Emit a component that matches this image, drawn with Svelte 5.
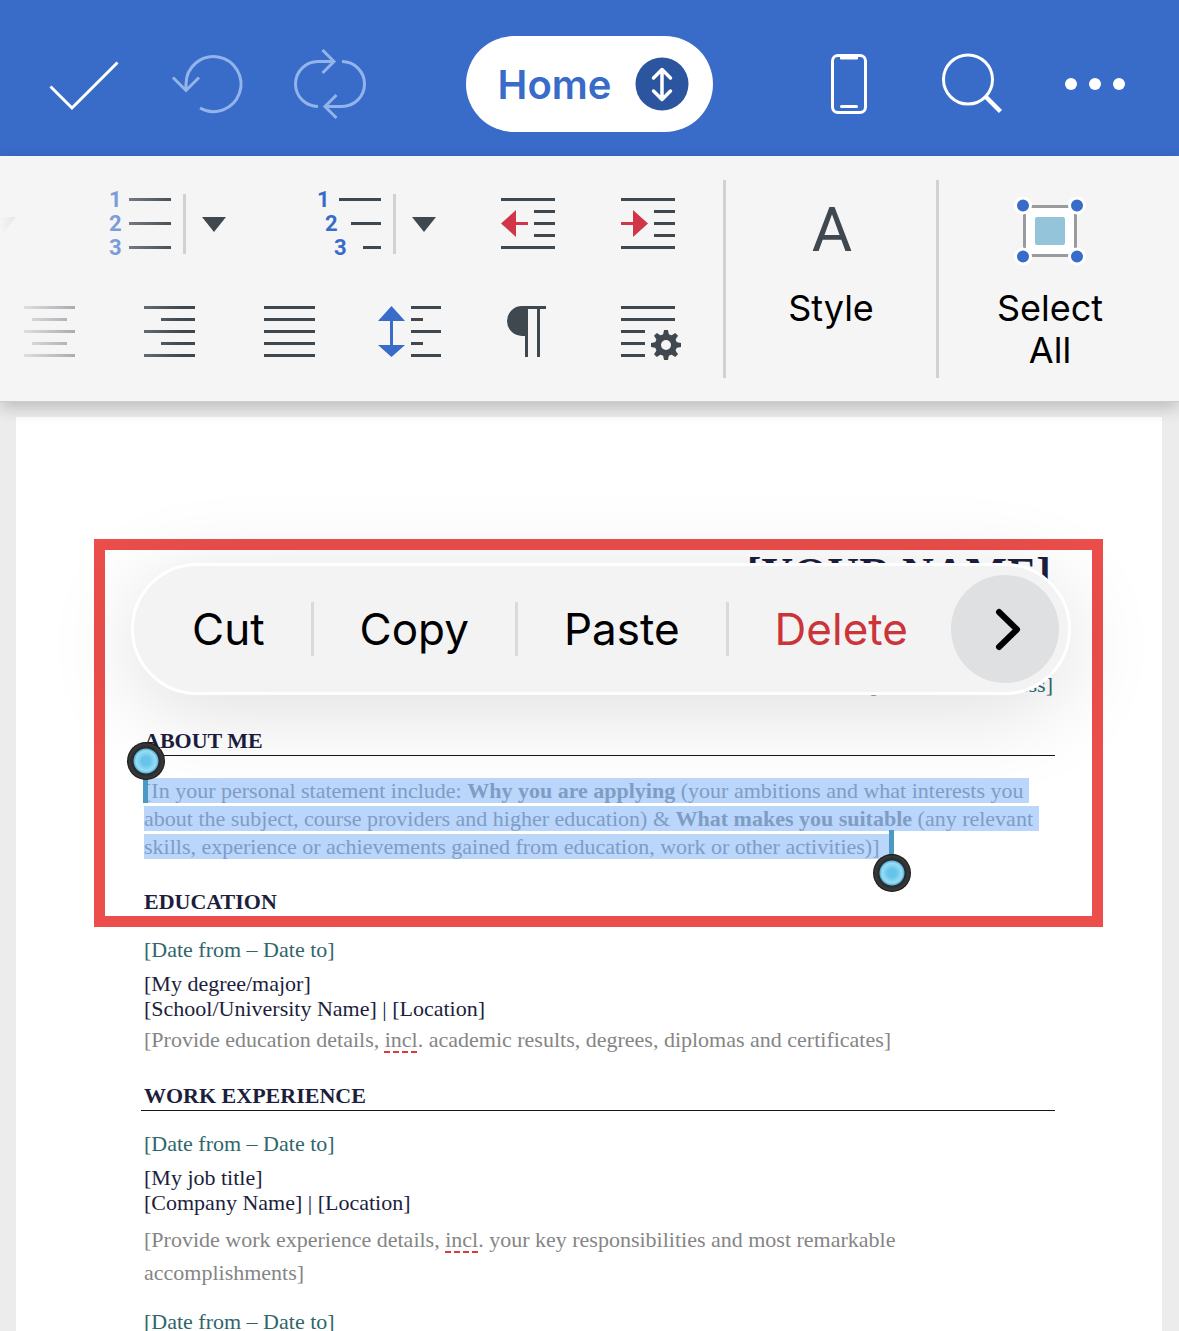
<script>
  const dates = "[Date from – Date to]";
  const teeth = [0, 45, 90, 135, 180, 225, 270, 315];
  const actions = ["Cut", "Copy", "Paste", "Delete"];

  // each line of an icon is [x1, x2], 12px apart
  const aligns = [
    { name: "Align center", lines: [[12, 63], [20, 55], [12, 63], [20, 55], [12, 63]] },
    { name: "Align right", lines: [[12, 63], [29, 63], [12, 63], [29, 63], [12, 63]] },
    { name: "Justify", lines: [[12, 63], [12, 63], [12, 63], [12, 63], [12, 63]] },
  ];
  const lists = [
    { name: "Numbering", digits: [7, 7, 7], starts: [27, 27, 27] },
    { name: "Multilevel list", digits: [5, 13, 22], starts: [27, 39, 51] },
  ];
  const indents = [
    { name: "Decrease indent", arrow: "M9 35.5 24 22v27zM24 34h12v3H24z" },
    { name: "Increase indent", arrow: "M36 35.5 21 22v27zM9 34h12v3H9z" },
  ];
</script>

<div class="app">
  <header>
    <div class="group">
      <button class="tool" aria-label="Done">
        <svg viewBox="0 0 72 72" class="line white"><path d="M2.5 38.5 24 60 69.5 14.5" /></svg>
      </button>
      <button class="tool" aria-label="Undo">
        <svg viewBox="0 0 72 72" class="line pale">
          <path d="M15 42v-6a27.5 27.5 0 1 1 14 24M2 29.5l13 13 13-13" />
        </svg>
      </button>
      <button class="tool" aria-label="Repeat">
        <svg viewBox="0 0 72 72" class="line pale">
          <path d="M24 58.5a22.5 22.5 0 0 1 0-45h16M28.5 2 40 13.5 28.5 25M48 13.5a22.5 22.5 0 0 1 0 45H32M42.5 47 31 58.5 42.5 70" />
        </svg>
      </button>
    </div>
    <button class="tab">
      Home
      <svg viewBox="0 0 54 54">
        <circle cx="27" cy="27" r="26.5" fill="#2c559f" />
        <path d="M27 12.5v30M18.5 21 27 12.5l8.5 8.5M18.5 34l8.5 8.5 8.5-8.5" fill="none" stroke="#fff" stroke-width="3.5" stroke-linecap="round" stroke-linejoin="round" />
      </svg>
    </button>
    <div class="group end">
      <button class="tool" aria-label="Mobile view">
        <svg viewBox="0 0 72 72" class="line white">
          <rect x="19.5" y="7.5" width="33" height="57" rx="5.5" />
          <path d="M27 8h18v2.5a1 1 0 0 1-1 1H28a1 1 0 0 1-1-1z" fill="#fff" stroke="none" />
          <path d="M28.5 58.5h15" stroke-linecap="round" />
        </svg>
      </button>
      <button class="tool" aria-label="Search">
        <svg viewBox="0 0 72 72" class="line white">
          <circle cx="32" cy="31.5" r="24.5" />
          <path d="M49 48 64.5 63.5" stroke-width="4.5" />
        </svg>
      </button>
      <button class="tool" aria-label="More">
        <svg viewBox="0 0 72 72" fill="#fff">
          <circle cx="12" cy="36" r="6" /><circle cx="36" cy="36" r="6" /><circle cx="60" cy="36" r="6" />
        </svg>
      </button>
    </div>
  </header>

  <div class="ribbon">
    <div class="tools">
      <div class="row top">
        <div class="split">
          <button class="caret" aria-label="Bullet options">
            <svg viewBox="0 0 36 36"><path d="M6 11h24L18 26z" /></svg>
          </button>
        </div>
        {#each lists as list}
          <div class="split">
            <button class="tool" aria-label={list.name}>
              <svg viewBox="0 0 72 72">
                {#each list.digits as x, i}
                  <text {x} y={19 + i * 24}>{i + 1}</text>
                  <path d="M{list.starts[i]} {10 + i * 24}H69v3H{list.starts[i]}z" />
                {/each}
              </svg>
            </button>
            <i></i>
            <button class="caret" aria-label="{list.name} options">
              <svg viewBox="0 0 36 36"><path d="M6 11h24L18 26z" /></svg>
            </button>
          </div>
        {/each}
        {#each indents as indent}
          <button class="tool" aria-label={indent.name}>
            <svg viewBox="0 0 72 72">
              <path d="M9 10h54v3H9zM42 22h21v3H42zM42 34h21v3H42zM42 46h21v3H42zM9 58h54v3H9z" />
              <path d={indent.arrow} fill="#d03648" />
            </svg>
          </button>
        {/each}
      </div>
      <div class="row">
        {#each aligns as align}
          <button class="tool" aria-label={align.name}>
            <svg viewBox="0 0 72 72">
              {#each align.lines as [a, b], i}
                <path d="M{a} {10 + i * 12}H{b}v3H{a}z" />
              {/each}
            </svg>
          </button>
        {/each}
        <button class="tool" aria-label="Line spacing">
          <svg viewBox="0 0 72 72">
            <path d="M19.5 10 33 25H21v24h12L19.5 61 6 49h12V25H6z" fill="#396bc8" />
            <path d="M39 10h30v3H39zM39 22h12v3H39zM39 34h30v3H39zM39 46h12v3H39zM39 58h30v3H39z" />
          </svg>
        </button>
        <button class="tool" aria-label="Formatting marks">
          <svg viewBox="0 0 72 72">
            <path d="M30 10h24v3h-6v48h-3V13h-9v48h-3V40h-3a15 15 0 0 1 0-30z" />
          </svg>
        </button>
        <button class="tool" aria-label="Paragraph settings">
          <svg viewBox="0 0 72 72">
            <path d="M9 10h54v3H9zM9 22h54v3H9zM9 34h24v3H9zM9 46h24v3H9zM9 58h24v3H9z" />
            <circle cx="54" cy="49" r="8" fill="none" stroke="#40484f" stroke-width="6" />
            {#each teeth as angle}
              <path d="M51 39l1-5h4l1 5z" transform="rotate({angle} 54 49)" />
            {/each}
          </svg>
        </button>
      </div>
    </div>
    <button class="big">
      <svg viewBox="0 0 72 72"><text class="letter" x="37" y="56">A</text></svg>
      <span>Style</span>
    </button>
    <button class="big last">
      <svg viewBox="0 0 72 72">
        <rect x="10.5" y="11.5" width="51" height="49" fill="#fff" stroke="#9a9b9c" stroke-width="3" />
        <rect x="21" y="22" width="30" height="28" rx="2" fill="#93c4d9" />
        <g fill="#396bc8" stroke="#fff" stroke-width="3">
          <circle cx="9" cy="10.5" r="7.5" /><circle cx="63" cy="10.5" r="7.5" />
          <circle cx="9" cy="61.5" r="7.5" /><circle cx="63" cy="61.5" r="7.5" />
        </g>
      </svg>
      <span>Select<br />All</span>
    </button>
  </div>

  <main>
    <article>
      <h1>[YOUR NAME]</h1>
      <p class="contact">[Your email address]</p>

      <h2>ABOUT ME</h2>
      <p class="about">
        <mark><span class="handle start"></span>[In your personal statement include: <b>Why you are applying</b> (your ambitions and what interests you&nbsp;</mark><br />
        <mark>about the subject, course providers and higher education) &amp; <b>What makes you suitable</b> (any relevant&nbsp;</mark><br />
        <mark>skills, experience or achievements gained from education, work or other activities)]&nbsp;&nbsp;<span class="handle finish"></span></mark>
      </p>

      <h2>EDUCATION</h2>
      <p class="date">{dates}</p>
      <p class="entry">[My degree/major]<br />[School/University Name] | [Location]</p>
      <p class="details">[Provide education details, <u>incl</u>. academic results, degrees, diplomas and certificates]</p>

      <h2>WORK EXPERIENCE</h2>
      <p class="date">{dates}</p>
      <p class="entry">[My job title]<br />[Company Name] | [Location]</p>
      <p class="details work">[Provide work experience details, <u>incl</u>. your key responsibilities and most remarkable<br />accomplishments]</p>
      <p class="date">{dates}</p>

      <div class="frame"></div>
      <div class="menu">
        {#each actions as action}
          <button class:delete={action === "Delete"}>{action}</button>
        {/each}
        <button class="next" aria-label="More actions">
          <svg viewBox="0 0 108 108">
            <path d="M48 37 66 54.5 48 72" fill="none" stroke="#000" stroke-width="6" stroke-linecap="round" stroke-linejoin="round" />
          </svg>
        </button>
      </div>
    </article>
  </main>
</div>

<style>
  :global(body) {
    margin: 0;
    background: #ececec;
  }
  .app {
    display: flex;
    flex-direction: column;
    height: 100vh;
    overflow: hidden;
    font-family: Inter, sans-serif;
  }
  button {
    padding: 0;
    border: 0;
    background: none;
    color: #000;
    font-family: inherit;
    cursor: pointer;
  }
  svg {
    display: block;
    flex: none;
    overflow: visible;
  }

  header {
    display: grid;
    grid-template-columns: 1fr auto 1fr;
    align-items: center;
    padding: 36px 48px 24px;
    background: #396bc8;
  }
  .group {
    display: flex;
    gap: 51px;
  }
  .end {
    justify-content: flex-end;
  }
  .tool {
    flex: none;
    width: 72px;
    height: 72px;
  }
  .line {
    fill: none;
    stroke-width: 3;
  }
  .white {
    stroke: #fff;
  }
  .pale {
    stroke: #92b4ea;
  }
  .tab {
    display: flex;
    align-items: center;
    gap: 24px;
    height: 96px;
    padding: 0 24px 0 32px;
    border-radius: 48px;
    background: #fff;
    color: #396bc8;
    font-size: 40px;
    font-weight: 600;
  }
  .tab svg {
    width: 54px;
  }

  .ribbon {
    position: relative;
    z-index: 1;
    display: flex;
    padding: 24px 18px 23px 0;
    border-bottom: 1px solid #cdcdcd;
    background: #f5f5f5;
    box-shadow: 0 6px 16px rgba(0, 0, 0, 0.2);
  }
  .tools {
    position: relative;
    display: flex;
    flex: 1;
    flex-direction: column;
    gap: 36px;
    min-width: 0;
    padding-top: 8px;
    overflow: hidden;
    fill: #40484f;
  }
  .tools::after {
    content: "";
    position: absolute;
    inset: 0 auto 0 0;
    width: 180px;
    background: linear-gradient(90deg, #f5f5f5, rgba(245, 245, 245, 0));
    pointer-events: none;
  }
  .row {
    display: flex;
    gap: 48px;
    padding-left: 12px;
  }
  .top {
    padding: 0;
    margin-left: -14px;
  }
  .split {
    display: flex;
    align-items: center;
    margin-right: 32px;
  }
  .split:nth-child(3) {
    margin-right: 2px;
  }
  .split i {
    width: 3px;
    height: 60px;
    margin: 0 10px 0 9px;
    background: #d1d1d1;
  }
  .caret {
    width: 36px;
    height: 36px;
  }
  .split text {
    fill: #396bc8;
    font: 700 22px Roboto, sans-serif;
  }
  .big {
    display: flex;
    flex-direction: column;
    align-items: center;
    width: 213px;
    height: 198px;
    padding-top: 15px;
    border-left: 3px solid #d1d1d1;
    font-size: 36px;
    line-height: 42px;
  }
  .last {
    width: 225px;
  }
  .big svg {
    width: 72px;
    height: 72px;
    margin-bottom: 20px;
  }
  .letter {
    fill: #40484f;
    font: 62px Roboto, sans-serif;
    text-anchor: middle;
  }

  main {
    flex: 1;
    min-height: 0;
    padding: 15px 17px 0 16px;
  }
  article {
    position: relative;
    padding: 133px 107px 40px 128px;
    background: #fff;
    color: #1c1e3c;
    font-family: "Liberation Serif", serif;
    font-size: 22px;
    line-height: 26px;
  }
  h1 {
    margin: 0 4px 74px 0;
    font-size: 44px;
    line-height: 48px;
    text-align: right;
  }
  h2 {
    margin: 27px 0 20px -3px;
    padding: 0 0 1px 3px;
    border-bottom: 1px solid #16181f;
    font-size: 22px;
    line-height: 26px;
  }
  p {
    margin: 0;
  }
  .contact {
    margin: 0 2px 30px 0;
    color: #2f666b;
    text-align: right;
  }
  .about {
    padding: 1px 0;
    line-height: 28px;
    white-space: nowrap;
  }
  mark {
    position: relative;
    z-index: 2;
    background: #bad6fb;
    color: #7f9cc5;
  }
  .date {
    color: #2f666b;
  }
  .entry {
    padding-top: 8px;
    line-height: 25px;
  }
  .details {
    padding-top: 2px;
    color: #858585;
    line-height: 33px;
  }
  .work {
    padding: 8px 0 20px;
  }
  u {
    text-decoration: underline dashed #e0383e 2px;
    text-underline-offset: 4px;
  }

  .handle {
    position: absolute;
    left: -1px;
    top: 0;
    width: 5px;
    height: 25px;
    background: #4a9ac5;
  }
  .handle::after {
    content: "";
    position: absolute;
    left: -16px;
    top: -36px;
    width: 38px;
    height: 38px;
    border-radius: 50%;
    background: radial-gradient(circle, #66c4ea 4px, #9addf5 10px, #5db4da 12px, #26282a 13px, #3a3a3a 17px, #111 19px);
  }
  .finish {
    left: auto;
    right: -3px;
    top: -4px;
  }
  .finish::after {
    top: 24px;
  }

  .frame {
    position: absolute;
    inset: 122px 59px auto 78px;
    box-sizing: border-box;
    height: 388px;
    border: 11px solid #eb4e4b;
    box-shadow: 0 0 0 5px #fff, inset 0 0 0 6px #fff;
    pointer-events: none;
  }
  .menu {
    position: absolute;
    top: 146px;
    left: 115px;
    display: flex;
    align-items: center;
    padding: 9px 9px 9px 12px;
    border: 3px solid #fff;
    border-radius: 66px;
    background: #f3f3f3;
    box-shadow: 0 16px 90px rgba(0, 0, 0, 0.13);
    font-family: Inter, sans-serif;
  }
  .menu button {
    height: 54px;
    padding: 0 46px;
    border-left: 3px solid #dadada;
    font-size: 44px;
    line-height: 54px;
  }
  .menu button:first-child {
    border: 0;
  }
  .menu .delete {
    padding-right: 43px;
    color: #cb3539;
  }
  .menu .next {
    width: 108px;
    height: 108px;
    padding: 0;
    border: 0;
    border-radius: 50%;
    background: #dfe0e2;
  }
</style>
